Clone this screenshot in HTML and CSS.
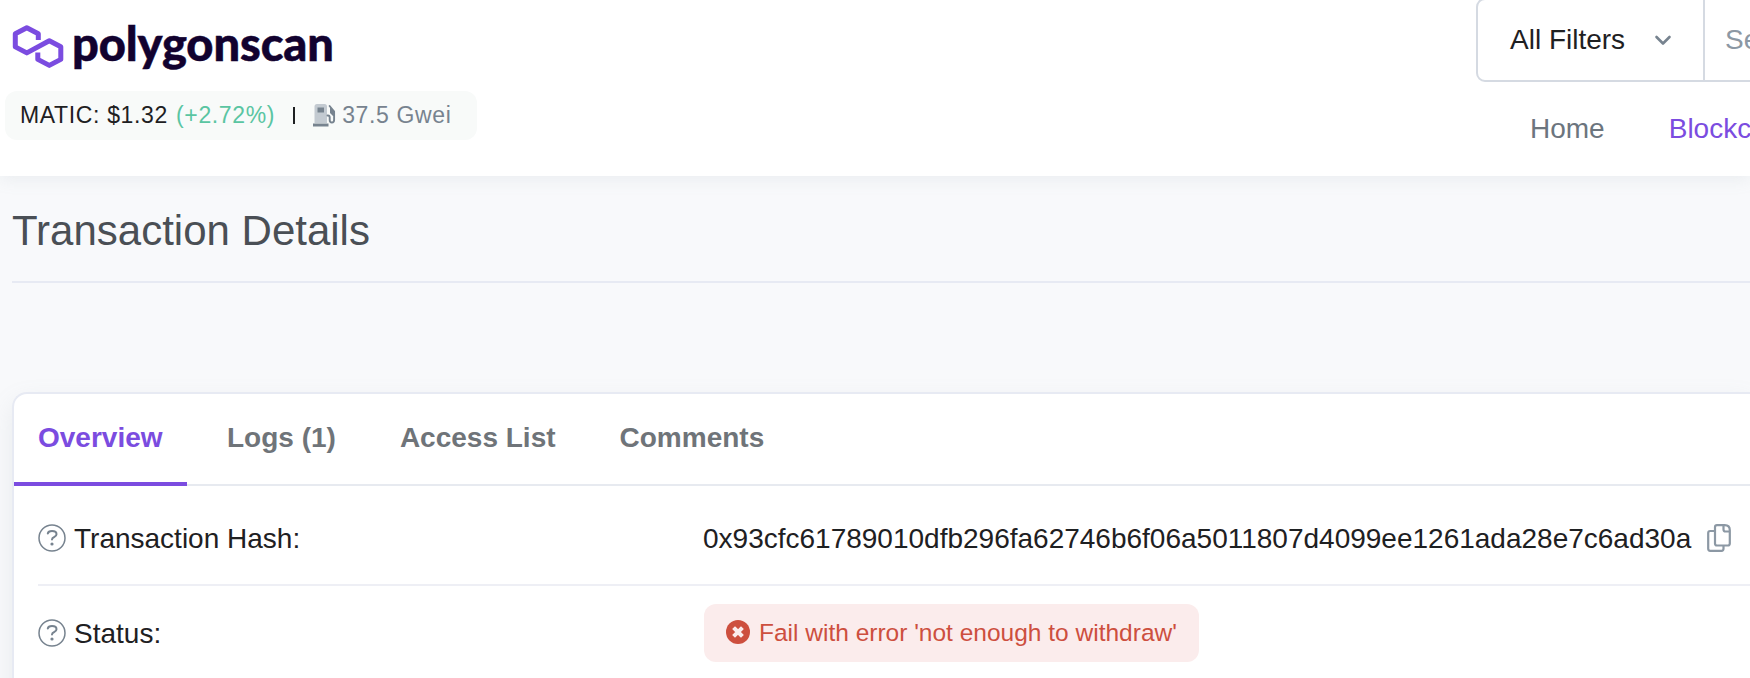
FILE: index.html
```html
<!DOCTYPE html>
<html lang="en">
<head>
<meta charset="utf-8">
<title>Polygon Transaction Details</title>
<link rel="stylesheet" href="styles.css">
</head>
<body>
<div class="page">
<header class="header">
  <div class="brand">
    <a class="logo">
      <svg class="logo-mark" width="52" height="46" viewBox="0 0 52 46" fill="none" stroke="#7b4ce0" stroke-width="5" stroke-linejoin="round">
        <path d="M26.300 16V9.700L14.800 3.700 3.300 9.700v13.200l11.500 6L37.300 16.800l11.500 6v12.600l-11.500 6-11.500-6V28.500"/>
      </svg>
      <span class="logo-text">polygonscan</span>
    </a>
    <div class="ticker">
      <span class="price">MATIC: $1.32</span>
      <span class="change">(+2.72%)</span>
      <span class="divider"></span>
      <svg class="pump" width="24" height="24" viewBox="0 0 24 24">
        <path fill="#c3cad1" d="M2.500 20V3.500Q2.500 1 5 1h7.500Q15 1 15 3.500V20z"/>
        <path fill="#77838f" d="M5.500 4.500h6.500v5H5.500zM1 20.500h15.500V23.500H1z"/>
        <path fill="none" stroke="#77838f" stroke-width="1.900" stroke-linecap="round" stroke-linejoin="round" d="M15.500 12.500h.5q1.700 0 1.700 2v2.500q0 2.500 2.200 2.500t2.200-2.500V8.500l-4.500-5.500"/>
        <path fill="#77838f" d="M18 4l4.500 4v5h-1.500l-3-3z"/>
      </svg>
      <span class="gas">37.5 Gwei</span>
    </div>
  </div>
  <div class="tools">
    <div class="search">
      <div class="filter"><span class="filter-label">All Filters</span>
        <svg width="18" height="12" viewBox="0 0 18 12" fill="none" stroke="#77838f" stroke-width="2.600" stroke-linecap="round" stroke-linejoin="round"><path d="M2.500 2L9 8.500 15.500 2"/></svg>
      </div>
      <div class="query">Search</div>
    </div>
    <nav class="nav"><a>Home</a><a class="current">Blockchain</a></nav>
  </div>
</header>
<main class="main">
  <h1 class="title"><span>Transaction Details</span></h1>
  <section class="card">
    <div class="tabs">
      <a class="tab active"><span>Overview</span></a>
      <a class="tab logs"><span>Logs (1)</span></a>
      <a class="tab"><span>Access List</span></a>
      <a class="tab"><span>Comments</span></a>
    </div>
    <div class="row">
      <div class="label">
        <svg class="help" width="28" height="28" viewBox="0 0 28 28" fill="none" stroke="#77838f"><circle cx="14" cy="14" r="13" stroke-width="1.500"/><path stroke-width="2" stroke-linecap="round" d="M9.800 9.500q.5-2.500 4.200-2.500 4.500 0 4.500 3.200 0 1.900-2.300 2.800-2.200.8-2.200 2.500"/><circle cx="14" cy="20" r="1.600" fill="#77838f" stroke="none"/></svg>
        <span class="label-text">Transaction Hash:</span>
      </div>
      <div class="value"><span class="hash">0x93cfc61789010dfb296fa62746b6f06a5011807d4099ee1261ada28e7c6ad30a</span>
        <svg class="copy" width="24" height="28" viewBox="0 0 24 28" fill="none" stroke="#8c98a4" stroke-width="2.200" stroke-linejoin="round"><path d="M7.500 7H3.200Q1.200 7 1.200 9v15.800q0 2 2 2h11.300q2 0 2-2V22"/><path d="M10 1.200h7.800q5 0 5 5V19.500q0 2-2 2H10q-2 0-2-2V3.200q0-2 2-2z"/><path d="M16.500 1.200v4.300q0 2 2 2h4.300"/></svg>
      </div>
    </div>
    <div class="row status">
      <div class="label">
        <svg class="help" width="28" height="28" viewBox="0 0 28 28" fill="none" stroke="#77838f"><circle cx="14" cy="14" r="13" stroke-width="1.500"/><path stroke-width="2" stroke-linecap="round" d="M9.800 9.500q.5-2.500 4.200-2.500 4.500 0 4.500 3.200 0 1.900-2.300 2.800-2.200.8-2.200 2.500"/><circle cx="14" cy="20" r="1.600" fill="#77838f" stroke="none"/></svg>
        <span class="label-text">Status:</span>
      </div>
      <div class="value">
        <div class="badge">
          <svg width="24" height="24" viewBox="0 0 24 24"><circle cx="12" cy="12" r="12" fill="#cd4f3e"/><path d="M9 9l6 6M15 9l-6 6" stroke="#fbecec" stroke-width="4" stroke-linecap="square"/></svg>
          <span>Fail with error 'not enough to withdraw'</span>
        </div>
      </div>
    </div>
  </section>
</main>
</div>
</body>
</html>
```
FILE: styles.css
```css
* { box-sizing: border-box; }
body {
  margin: 0;
  color: #1e2022;
  font-family: "Liberation Sans", Arial, sans-serif;
  font-size: 28px;
  white-space: nowrap;
}
.page {
  height: 678px;
  overflow: hidden;
  background: #f8f9fb;
}
svg { display: block; flex: none; }
.header {
  display: flex;
  justify-content: space-between;
  height: 176px;
  background: #fff;
  box-shadow: 0 3px 16px rgba(140, 152, 164, .13);
}
.brand { padding: 18px 0 0 5px; }
.logo { display: flex; height: 73px; padding: 6px 0 0 7px; }
.logo-text {
  margin: -11px 0 0 8px;
  color: #12022f;
  font: 900 47px/60px Lato, sans-serif;
  letter-spacing: -.1px;
  -webkit-text-stroke: .5px #12022f;
}
.ticker {
  display: flex;
  align-items: center;
  width: 472px;
  height: 49px;
  padding-left: 15px;
  border-radius: 12px;
  background: #f8faf9;
  font-size: 23px;
  letter-spacing: .65px;
}
.change { margin-left: 8px; color: #5ac5a2; }
.divider { width: 2px; height: 17px; margin: 0 17px 0 18px; background: #1e2022; }
.pump { margin-top: -2px; }
.gas { margin-left: 6px; color: #77838f; }
.tools { width: 274px; overflow: hidden; }
.search {
  display: flex;
  width: 400px;
  height: 84px;
  margin-top: -2px;
  border: 2px solid #d5dae2;
  border-radius: 9px;
}
.filter { display: flex; align-items: center; width: 227px; padding-left: 32px; border-right: 2px solid #d5dae2; }
.filter svg { margin: 1px 0 0 29px; }
.query { padding-left: 20px; color: #8c98a4; line-height: 80px; }
.nav { display: flex; gap: 64px; padding: 30px 0 0 54px; color: #6c757e; line-height: 34px; }
.current { color: #7b4ce0; }
.main { padding-left: 12px; }
.title {
  height: 107px;
  margin: 0;
  border-bottom: 2px solid #e7eaf3;
  color: #4a4f55;
  font-size: 42px;
  font-weight: 400;
  line-height: 109px;
}
.card {
  height: 340px;
  margin-top: 109px;
  border: 2px solid #e7eaf3;
  border-right: 0;
  border-radius: 15px 0 0 0;
  background: #fff;
  box-shadow: 0 10px 24px rgba(140, 152, 164, .15);
}
.tabs {
  display: flex;
  height: 92px;
  border-bottom: 2px solid #e7eaf0;
  color: #6f7479;
  font-weight: 700;
  line-height: 87px;
}
.tab { margin-left: 64px; }
.logs { margin-left: 40px; }
.active { width: 173px; height: 92px; margin-left: 0; padding-left: 24px; border-bottom: 4px solid #7b4ce0; color: #7b4ce0; }
.row { display: flex; height: 100px; margin-left: 24px; padding-top: 5px; border-bottom: 2px solid #eeeff5; }
.label { display: flex; align-items: center; width: 666px; gap: 8px; }
.label-text, .hash { padding-top: 2px; }
.value { display: flex; align-items: center; }
.hash { margin-left: -1px; }
.copy { margin-left: 16px; }
.status { height: 93px; padding-top: 0; border: 0; }
.badge {
  display: flex;
  align-items: center;
  gap: 9px;
  width: 495px;
  height: 58px;
  margin-top: 1px;
  padding-left: 22px;
  border-radius: 12px;
  background: #fbecec;
  color: #cd4f3e;
  font-size: 24.5px;
}
.badge svg { margin-top: -2px; }
```
